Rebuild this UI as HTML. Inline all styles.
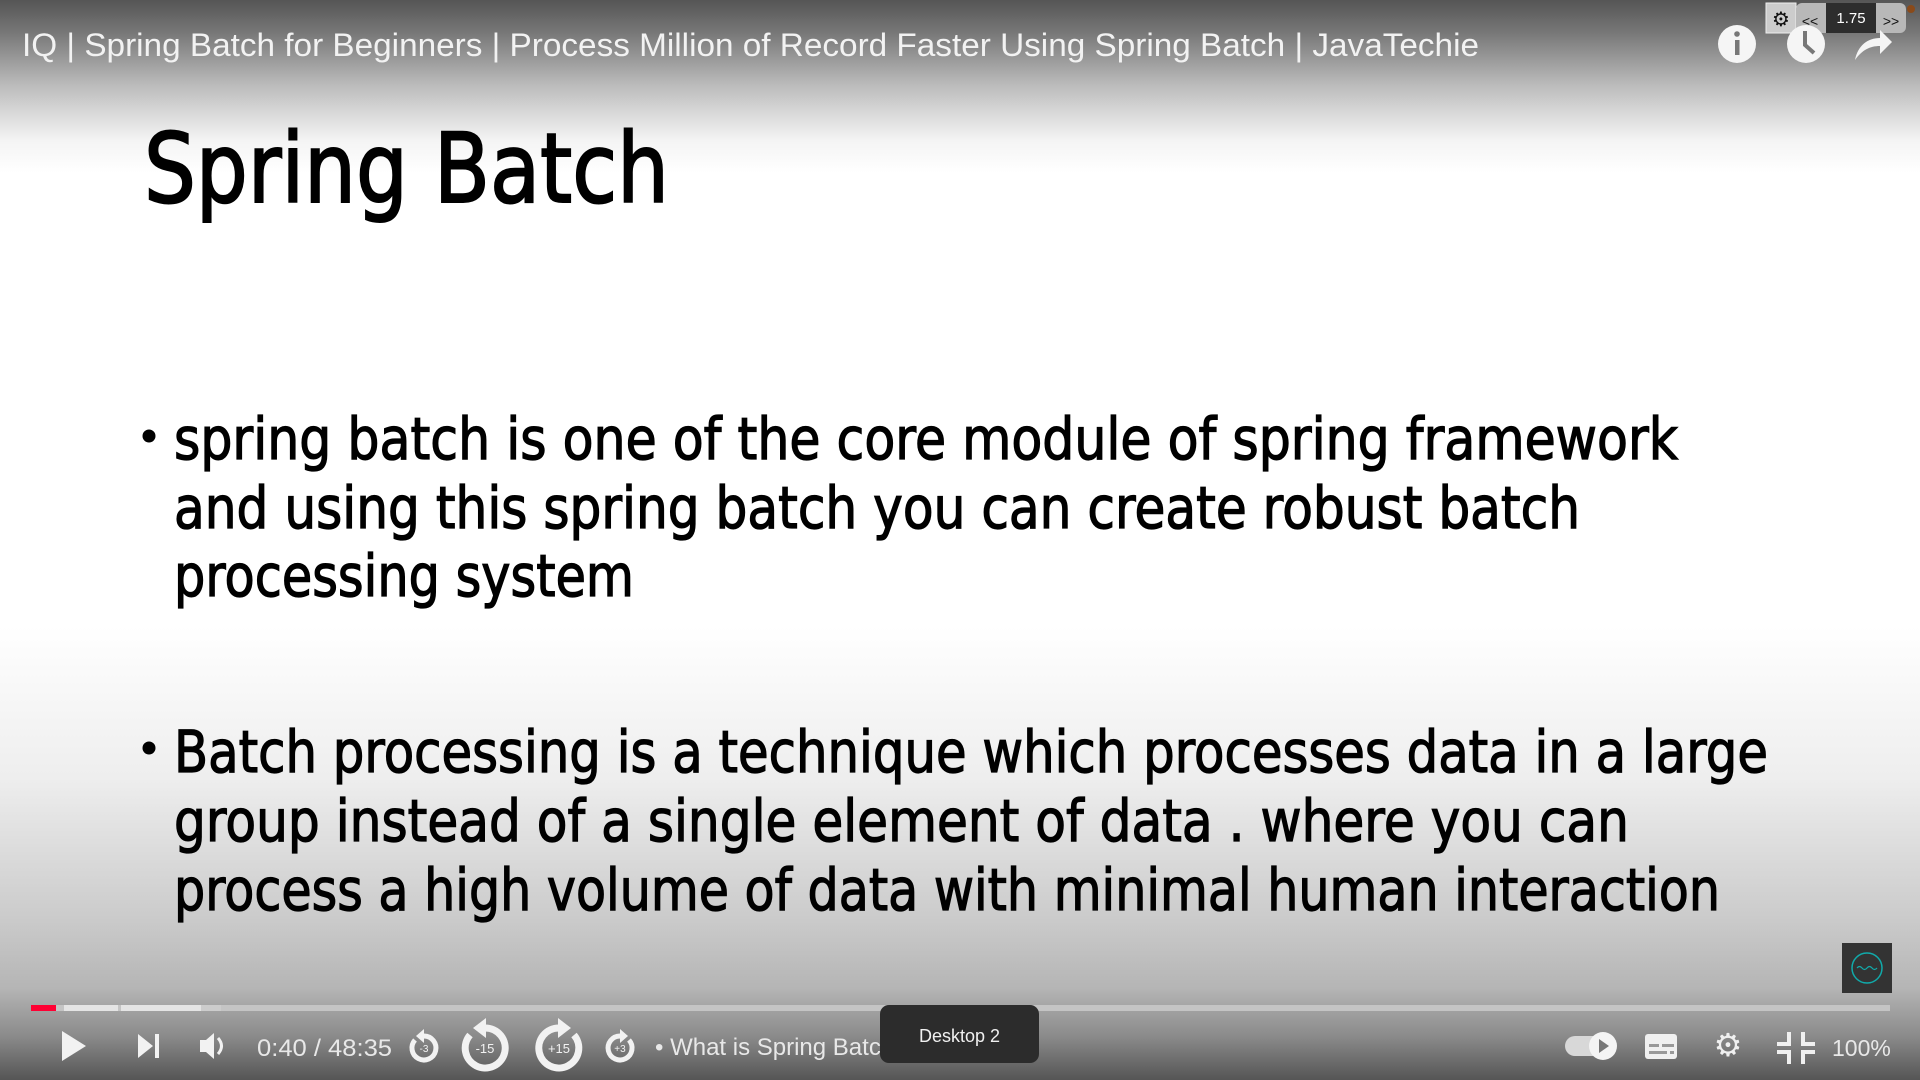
<!DOCTYPE html>
<html><head><meta charset="utf-8"><style>
html,body{margin:0;padding:0;width:1920px;height:1080px;overflow:hidden;background:#fff}
svg{display:block}
</style></head><body>
<svg width="1920" height="1080" viewBox="0 0 1920 1080" xmlns="http://www.w3.org/2000/svg">
<defs>
<linearGradient id="bg" x1="0" y1="0" x2="0" y2="1">
<stop offset="0" stop-color="#555"/>
<stop offset="0.03" stop-color="#777"/>
<stop offset="0.08" stop-color="#bdbdbd"/>
<stop offset="0.13" stop-color="#f4f4f4"/>
<stop offset="0.16" stop-color="#fff"/>
<stop offset="0.58" stop-color="#fff"/>
<stop offset="0.72" stop-color="#eeeeee"/>
<stop offset="0.85" stop-color="#cbcbcb"/>
<stop offset="0.915" stop-color="#b5b5b5"/>
<stop offset="0.96" stop-color="#8a8a8a"/>
<stop offset="1" stop-color="#555"/>
</linearGradient>
</defs>
<rect width="1920" height="1080" fill="url(#bg)"/>

<!-- header -->
<text x="22" y="56" font-family="Liberation Sans, sans-serif" font-size="32" fill="#f2f2f2" textLength="1457" lengthAdjust="spacingAndGlyphs">IQ | Spring Batch for Beginners | Process Million of Record Faster Using Spring Batch | JavaTechie</text>

<!-- top right controls -->
<rect x="1766" y="3" width="30" height="30" fill="#ccc" stroke="#eee" stroke-width="1"/>
<text x="1781" y="26" text-anchor="middle" font-family="DejaVu Sans, sans-serif" font-size="20" fill="#111">⚙</text>
<rect x="1796" y="3" width="110" height="30" rx="6" fill="#b8b8b8"/>
<text x="1810" y="26" text-anchor="middle" font-family="Liberation Sans, sans-serif" font-size="14" fill="#111">&lt;&lt;</text>
<rect x="1826" y="3" width="50" height="30" fill="#2d2d2d"/>
<text x="1851" y="23" text-anchor="middle" font-family="Liberation Sans, sans-serif" font-size="15" fill="#fff">1.75</text>
<text x="1891" y="26" text-anchor="middle" font-family="Liberation Sans, sans-serif" font-size="14" fill="#111">&gt;&gt;</text>
<circle cx="1911" cy="9" r="4" fill="#8a4a1a"/>
<circle cx="1737" cy="44" r="19" fill="#f5f5f5"/>
<rect x="1735" y="40" width="4.5" height="15" fill="#777"/>
<circle cx="1737" cy="34" r="2.8" fill="#777"/>
<circle cx="1806" cy="44" r="19" fill="#f5f5f5"/>
<path d="M1805 31 V45 L1814 53" stroke="#777" stroke-width="4" fill="none"/>
<path d="M1855 60 C1858 45 1868 38 1880 38 V30 L1892 42 L1880 54 V46 C1870 46 1862 50 1855 60 Z" fill="#f5f5f5"/>

<!-- slide -->
<g font-family="Comic Sans MS, DejaVu Sans, Liberation Sans, sans-serif" fill="#000" stroke="#000">
<text x="144" y="202" font-size="96" stroke-width="2" textLength="525" lengthAdjust="spacingAndGlyphs">Spring Batch</text>
<circle cx="149" cy="436" r="6"/>
<text x="174" y="459" font-size="58" stroke-width="1.3" textLength="1504" lengthAdjust="spacingAndGlyphs">spring batch is one of the core module of spring framework</text>
<text x="174" y="528" font-size="58" stroke-width="1.3" textLength="1406" lengthAdjust="spacingAndGlyphs">and using this spring batch you can create robust batch</text>
<text x="174" y="596" font-size="58" stroke-width="1.3" textLength="460" lengthAdjust="spacingAndGlyphs">processing system</text>
<circle cx="149" cy="748" r="6"/>
<text x="174" y="772" font-size="58" stroke-width="1.3" textLength="1594" lengthAdjust="spacingAndGlyphs">Batch processing is a technique which processes data in a large</text>
<text x="174" y="841" font-size="58" stroke-width="1.3" textLength="1455" lengthAdjust="spacingAndGlyphs">group  instead of a single element of data . where you can</text>
<text x="174" y="910" font-size="58" stroke-width="1.3" textLength="1546" lengthAdjust="spacingAndGlyphs">process a high volume of data with minimal human interaction</text>
</g>

<!-- logo -->
<rect x="1842" y="943" width="50" height="50" fill="#333"/>
<circle cx="1867" cy="968" r="15" fill="none" stroke="#1aa" stroke-width="1.5"/>
<path d="M1857 968 q2.5 -3 5 0 t5 0 t5 0 t5 0" stroke="#1aa" stroke-width="1.2" fill="none"/>

<!-- progress -->
<rect x="31" y="1005" width="1859" height="6" fill="#c4c4c4"/>
<rect x="31" y="1005" width="25" height="6" fill="#f03"/>
<rect x="64" y="1005" width="54" height="6" fill="#e4e4e4"/>
<rect x="121" y="1005" width="80" height="6" fill="#e4e4e4"/>
<rect x="201" y="1005" width="20" height="6" fill="#ccc"/>

<!-- controls -->
<g fill="#f2f2f2">
<path d="M62 1031 L86 1046 L62 1061 Z"/>
<path d="M138 1034 L153 1046 L138 1058 Z"/><rect x="155" y="1034" width="4" height="24"/>
<path d="M200 1040 h6 l8 -7 v26 l-8 -7 h-6 z"/>
<path d="M218 1038 q7 8 0 16" stroke="#f2f2f2" stroke-width="3" fill="none"/>
</g>
<text x="257" y="1056" font-family="Liberation Sans, sans-serif" font-size="24" fill="#e8e8e8" textLength="135" lengthAdjust="spacingAndGlyphs">0:40 / 48:35</text>
<g fill="none" stroke="#f2f2f2">
<path d="M424 1036 A12 12 0 1 1 415 1040" stroke-width="5"/>
<path d="M485 1028 A20 20 0 1 1 470 1035" stroke-width="7"/>
<path d="M559 1028 A20 20 0 1 0 574 1035" stroke-width="7"/>
<path d="M620 1036 A12 12 0 1 0 629 1040" stroke-width="5"/>
</g>
<g fill="#f2f2f2">
<path d="M424 1029 L424 1043 L416 1036 Z"/>
<path d="M486 1018 L486 1038 L473 1028 Z"/>
<path d="M558 1018 L558 1038 L571 1028 Z"/>
<path d="M620 1029 L620 1043 L628 1036 Z"/>
</g>
<g font-family="Liberation Sans, sans-serif" fill="#f2f2f2" text-anchor="middle" font-size="10">
<text x="424" y="1052">-3</text>
<text x="485" y="1053" font-size="13">-15</text>
<text x="559" y="1053" font-size="13">+15</text>
<text x="620" y="1052">+3</text>
</g>
<text x="655" y="1055" font-family="Liberation Sans, sans-serif" font-size="24" fill="#e8e8e8">• What is Spring Batc</text>

<!-- tooltip -->
<rect x="880" y="1005" width="159" height="58" rx="9" fill="#2c2c2c"/>
<text x="959.5" y="1042" text-anchor="middle" font-family="Liberation Sans, sans-serif" font-size="18" fill="#f0f0f0">Desktop 2</text>

<!-- right controls -->
<rect x="1565" y="1036" width="40" height="20" rx="10" fill="#d8d8d8"/>
<circle cx="1603" cy="1046" r="14" fill="#f4f4f4"/>
<path d="M1599 1039 L1609 1046 L1599 1053 Z" fill="#777"/>
<rect x="1645" y="1034" width="32" height="25" rx="3" fill="#f0f0f0"/>
<rect x="1649" y="1044" width="10" height="3" fill="#999"/><rect x="1662" y="1044" width="12" height="3" fill="#999"/>
<rect x="1649" y="1051" width="18" height="3" fill="#999"/><rect x="1670" y="1051" width="4" height="3" fill="#999"/>
<text x="1728" y="1056" text-anchor="middle" font-family="DejaVu Sans, sans-serif" font-size="32" fill="#f0f0f0">⚙</text>
<g fill="#f0f0f0">
<path d="M1787 1032 h4 v14 h-14 v-4 h10 z"/>
<path d="M1801 1032 h4 v10 h10 v4 h-14 z"/>
<path d="M1777 1050 h14 v14 h-4 v-10 h-10 z"/>
<path d="M1801 1050 h14 v4 h-10 v10 h-4 z"/>
</g>
<text x="1832" y="1056" font-family="Liberation Sans, sans-serif" font-size="23" fill="#e8e8e8">100%</text>
</svg>
</body></html>
